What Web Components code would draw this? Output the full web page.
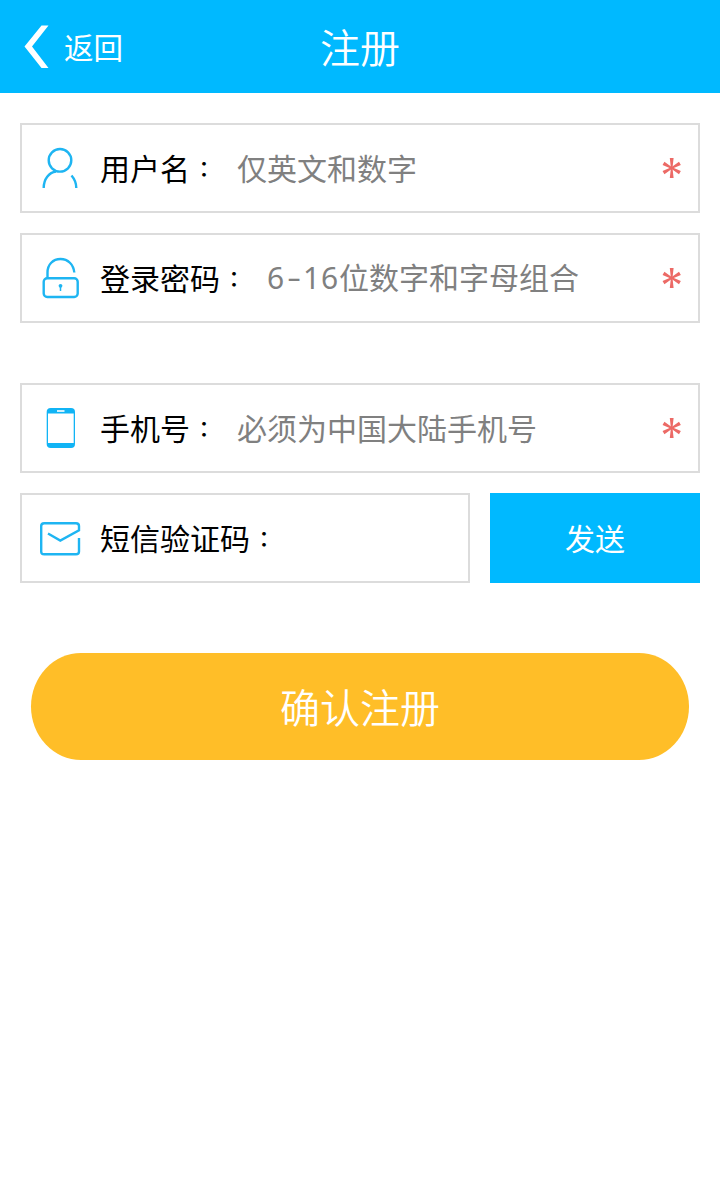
<!DOCTYPE html>
<html lang="zh-CN">
<head>
<meta charset="utf-8">
<title>注册</title>
<style>
html,body{margin:0;background:#fff}
body{font-family:"Noto Sans CJK SC",sans-serif;font-size:30px;color:#000}
</style>
</head>
<body>
<register-page></register-page>
<script>
const define=(name,html)=>customElements.define(name,class extends HTMLElement{
  constructor(){
    super();
    const t=document.createElement('template');
    t.innerHTML=html;
    this.attachShadow({mode:'open'}).append(t.content.cloneNode(true));
  }
});

define('nav-bar',`<style>
:host{display:grid;grid-template-columns:1fr auto 1fr;align-items:center;height:93px;background:#00b9ff;color:#fff}
.back{display:flex;align-items:center;padding-left:24px;gap:15px;line-height:44px}
svg{display:block}
h1{margin:0;font-size:40px;font-weight:350;line-height:60px;padding-bottom:1px}
.back span{padding-bottom:1px;font-size:29.500px}
</style>
<div class="back"><svg width="25" height="44" viewBox="0 0 25 44"><path d="M17.500 .500H24.500L8 21.500 24.500 43H17.500L.5 21.500Z" fill="#fff"/></svg><span><slot name="back"></slot></span></div>
<h1><slot></slot></h1>`);

const icons={
  user:'<circle cx="20" cy="12.300" r="11.300"/><path d="M3.700 40C3.700 31 9 24.500 16 23.500M31.500 27.500C34.500 31 36.300 35 36.300 40"/>',
  lock:'<rect x="3.700" y="20.300" width="34" height="18.700" rx="3.500"/><path d="M7.500 20V14.500C7.500 6.500 13 1 20.500 1S33.500 6.500 34.300 14.500"/><circle cx="20.500" cy="27.800" r="1.900" fill="#1eb5f2" stroke="none"/><path d="M20.500 28V33" stroke-width="1.500"/>',
  phone:'<rect x="6.700" y="0" width="28.300" height="40" rx="4" fill="#11b4f5" stroke="none"/><path d="M8 5.500H33.700V35H8Z" fill="#fff" stroke="none"/><path d="M17 3H24.500" stroke="#fff" stroke-width="1.600"/>',
  mail:'<path d="M39 20V33.500Q39 36.300 36 36.300H4.200Q1.200 36.300 1.200 33.500V8Q1.200 5.200 4.200 5.200H36Q39 5.200 39 8V12.200L20.300 22.500 8 15.500"/>'
};
customElements.define('field-icon',class extends HTMLElement{
  constructor(){super();this.attachShadow({mode:'open'});}
  connectedCallback(){
    this.shadowRoot.innerHTML='<style>:host{display:block;width:40px;height:40px;flex:none}svg{display:block;overflow:visible}</style><svg width="40" height="40" viewBox="0 0 40 40" fill="none" stroke="#1eb5f2" stroke-width="2.400">'+icons[this.getAttribute('name')]+'</svg>';
  }
});

define('form-field',`<style>
:host{display:flex;align-items:center;box-sizing:border-box;height:90px;border:2px solid #dcdcdc;padding:0 16px 0 18px;line-height:44px}
.label{margin-left:20px;padding-bottom:2px;white-space:nowrap}
.colon{font-family:"Noto Sans CJK TC",sans-serif;font-size:22px;font-weight:500;line-height:0;vertical-align:3px;margin:0 5px 0 3px}
.hint{flex:1;margin-left:17px;padding-bottom:2px;color:#808080;font-weight:400;white-space:nowrap}
</style>
<slot name="icon"></slot><div class="label"><slot></slot><span class="colon" lang="zh-TW">：</span></div><div class="hint"><slot name="hint"></slot></div><slot name="mark"></slot>`);

define('required-mark',`<style>
:host{display:block;width:20px;height:20px;flex:none}svg{display:block}
</style><svg width="20" height="20" viewBox="0 0 20 20" fill="#ec6a66"><path d="M7.800 0H11.600L10.500 10 11.600 20H7.800L8.900 10Z"/><path d="M7.800 .6H11.600L10.500 10 11.600 19.400H7.800L8.900 10Z" transform="rotate(61 9.700 10)"/><path d="M7.800 .6H11.600L10.500 10 11.600 19.400H7.800L8.900 10Z" transform="rotate(-61 9.700 10)"/></svg>`);

define('send-button',`<style>
:host{display:block}
button{all:unset;display:flex;box-sizing:border-box;width:100%;height:90px;align-items:center;justify-content:center;background:#00b9ff;color:#fff;line-height:44px;padding-bottom:2px}
</style><button><slot></slot></button>`);

define('confirm-button',`<style>
:host{display:block;margin:70px 31px 0}
button{all:unset;display:flex;box-sizing:border-box;width:100%;height:107px;align-items:center;justify-content:center;border-radius:50px / 53.500px;background:#ffbe28;color:#fff;font-size:40px;font-weight:350;line-height:60px;padding-bottom:1px}
</style><button><slot></slot></button>`);

define('register-page',`<style>
:host{display:block;min-height:1182px;background:#fff}
form{display:flex;flex-direction:column;gap:20px;padding:30px 20px 0}
.phone{margin-top:40px}
.row{display:grid;grid-template-columns:450px 210px;gap:20px}
.num{font-family:"Noto Sans",sans-serif;letter-spacing:.85px}
.dash{font-family:"Noto Sans",sans-serif;font-size:44px;font-weight:300;line-height:0;vertical-align:-3px;margin:0 1.950px}
</style>
<nav-bar><span slot="back">返回</span>注册</nav-bar>
<form>
<form-field><field-icon slot="icon" name="user"></field-icon>用户名<span slot="hint">仅英文和数字</span><required-mark slot="mark"></required-mark></form-field>
<form-field><field-icon slot="icon" name="lock"></field-icon>登录密码<span slot="hint"><span class="num">6</span><span class="dash">-</span><span class="num">16</span>位数字和字母组合</span><required-mark slot="mark"></required-mark></form-field>
<form-field class="phone"><field-icon slot="icon" name="phone"></field-icon>手机号<span slot="hint">必须为中国大陆手机号</span><required-mark slot="mark"></required-mark></form-field>
<div class="row"><form-field><field-icon slot="icon" name="mail"></field-icon>短信验证码</form-field><send-button>发送</send-button></div>
</form>
<confirm-button>确认注册</confirm-button>`);
</script>
</body>
</html>
